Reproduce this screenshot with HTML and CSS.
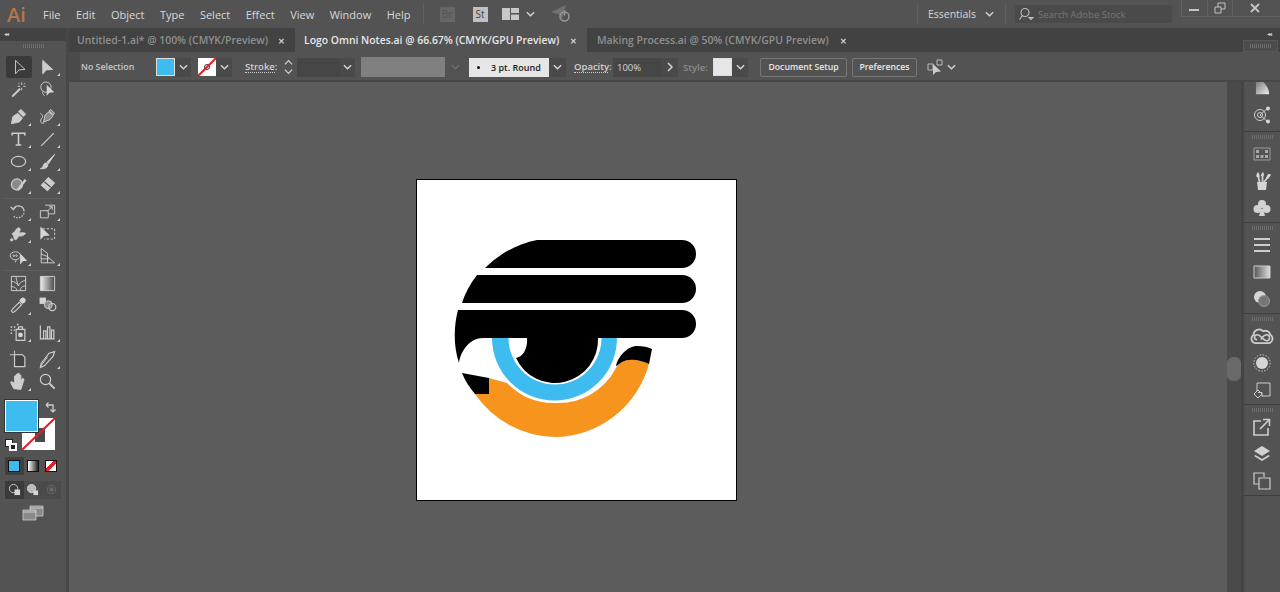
FILE: index.html
```html
<!DOCTYPE html>
<html lang="en">
<head>
    <meta charset="UTF-8">
    <title>Logo Omni Notes.ai</title>
    <link rel="stylesheet" href="styles.css">
</head>
<body>
    <header class="menubar">
        <span class="app-logo">Ai</span>
        <nav class="menu">
            <span>File</span><span>Edit</span><span>Object</span><span>Type</span><span>Select</span><span>Effect</span><span>View</span><span>Window</span><span>Help</span>
        </nav>
        <span class="menu-sep sep-apps"></span>
        <span class="badge badge-br">Br</span>
        <span class="badge badge-st">St</span>
        <svg class="layout-ico" viewBox="0 0 17 12"><path d="M0 0h8v12H0zM9 0h8v5H9zM9 6.500h8V12H9z"/></svg>
        <svg class="chev chev-menu" viewBox="0 0 10 6"><path d="M1 1l4 4 4-4"/></svg>
        <svg class="gpu-ico" viewBox="0 0 22 20"><path class="dim" d="M1 8L16 1l-4 15-2-5z"/><circle cx="14.500" cy="12.500" r="4.500"/><path d="M14.500 6.500v5"/></svg>
        <div class="menubar-right">
            <span class="menu-sep"></span>
            <span class="workspace">Essentials</span>
            <svg class="chev chev-work" viewBox="0 0 10 6"><path d="M1 1l4 4 4-4"/></svg>
            <span class="menu-sep sep-search"></span>
            <div class="search">
                <svg viewBox="0 0 16 14"><circle cx="7" cy="5.500" r="4"/><path d="M4.500 8.500L1.500 12.500M11 10.500h4l-2 2z"/></svg>
                <span>Search Adobe Stock</span>
            </div>
            <div class="win-btns">
                <span class="win-btn"><svg viewBox="0 0 12 12"><path d="M1 8h10" stroke-width="2"/></svg></span>
                <span class="win-btn"><svg viewBox="0 0 12 12"><path d="M1 5h6v6H1zM4 5V1h7v6H7"/></svg></span>
                <span class="win-btn win-close"><svg viewBox="0 0 12 12"><path d="M2 2l8 8M10 2l-8 8" stroke-width="1.800"/></svg></span>
            </div>
        </div>
    </header>

    <aside class="tools">
        <div class="panel-head">&#9666;&#9666;</div>
        <div class="grip-row"><span class="dock-grip"></span></div>

        <div class="tool-group">
            <span class="tool tool-active"><svg class="ico" viewBox="0 0 24 24"><path d="M7 3v17l4.500-5 7.500-.500z"/></svg></span>
            <span class="tool more"><svg class="ico solid" viewBox="0 0 24 24"><path d="M6 3v17l4.500-5 8-.500z"/></svg></span>
            <span class="tool"><svg class="ico" viewBox="0 0 24 24"><path d="M4 21L14 11" stroke-width="2.500"/><path d="M16 3v3M16 10v3M11 8h3M18 8h3M12 4l1.500 1.500M20 4l-1.500 1.500"/></svg></span>
            <span class="tool"><svg class="ico" viewBox="0 0 24 24"><circle cx="10" cy="9" r="6.500"/><path d="M7 14c-3 2 0 4 1 6"/><path class="fill-light" d="M11 6v14l3.500-4 6-.500z"/></svg></span>
        </div>

        <div class="tool-group group-line">
            <span class="tool more"><svg class="ico solid" viewBox="0 0 24 24"><path d="M3 21l2-9 6-4 6 6-4 5zM12 6l3-3 6 6-3 3z"/></svg></span>
            <span class="tool more"><svg class="ico" viewBox="0 0 24 24"><path class="fill-mid" d="M7 19l2-9 5-4 5 5-4 5zM14 5l2-2 5 5-2 2z"/><path d="M8 20c-5 2-6-3-3-6 2-2 0-5-2-6"/></svg></span>
            <span class="tool more"><svg class="ico type" viewBox="0 0 24 24"><path d="M4 7V4h16v3M12 4v15M8.500 19h7" stroke-width="2"/></svg></span>
            <span class="tool more"><svg class="ico" viewBox="0 0 24 24"><path d="M4 20L20 4" stroke-width="1.500"/></svg></span>
            <span class="tool more"><svg class="ico" viewBox="0 0 24 24"><ellipse cx="12" cy="12" rx="9" ry="6.500" stroke-width="1.500"/></svg></span>
            <span class="tool more"><svg class="ico solid" viewBox="0 0 24 24"><path d="M21 3L11 13l2 2zM10 14c-3 0-3 3-4 5-.500 1-2 1.500-3 2 4 .500 9 0 9.500-5z"/></svg></span>
            <span class="tool more"><svg class="ico" viewBox="0 0 24 24"><circle class="fill-mid" cx="10" cy="12" r="7" stroke-width="1.500"/><path d="M11 19L21 6" stroke-width="3"/></svg></span>
            <span class="tool more"><svg class="ico solid" viewBox="0 0 24 24"><path d="M13 3l8 7-9 10-8-7z"/><path class="cut" d="M8 8.500l8 7"/></svg></span>
        </div>

        <div class="tool-group group-line">
            <span class="tool more"><svg class="ico" viewBox="0 0 24 24"><path d="M6 8c3-5 13-4 13 4" stroke-width="1.500"/><path d="M2 6l3.500 3.500L9 5.500" stroke-width="1.500"/><path d="M19 14c-1 5-9 8-13 4" stroke-width="1.500" stroke-dasharray="2 1.500"/></svg></span>
            <span class="tool more"><svg class="ico" viewBox="0 0 24 24"><path d="M3 11h10v9H3zM9 4h12v11H13"/><path d="M11 12l7-6M14 6h4v4"/></svg></span>
            <span class="tool more"><svg class="ico solid" viewBox="0 0 24 24"><path d="M4 12c2-1 4-2 5-5 1-2 4-3 5-1 1 3-2 3-1 5 2 1 6-1 8 1-2 2-5 4-8 3-2 1-3 5-5 5-2-1-1-4-4-8z"/><circle cx="3.500" cy="20" r="1.500"/></svg></span>
            <span class="tool"><svg class="ico" viewBox="0 0 24 24"><path d="M6 6h15v13H8" stroke-dasharray="3 2"/><path class="fill-light" d="M3 3v17l4.500-5 7.500-.500z"/></svg></span>
            <span class="tool more"><svg class="ico" viewBox="0 0 24 24"><ellipse cx="8" cy="11" rx="6.500" ry="5"/><path d="M9 16.500l-1 3"/><circle cx="6" cy="11" r="1"/><circle cx="9.500" cy="11" r="1"/><path class="fill-light" d="M14 8v14l3.500-4 5.500-.500z"/></svg></span>
            <span class="tool more"><svg class="ico" viewBox="0 0 24 24"><path d="M4 2v18h17M4 2l8 6v12M4 9l8 3 9 8M4 15h10"/></svg></span>
        </div>

        <div class="tool-group">
            <span class="tool"><svg class="ico" viewBox="0 0 24 24"><path d="M3 3h18v18H3zM3 9c5 1 7 3 9 6M21 8c-4 1-7 2-9 7M9 3c0 4 1 7 3 12M3 16c4 0 6 1 7 5M21 15c-3 0-6 1-7 6"/></svg></span>
            <span class="tool"><svg class="ico" viewBox="0 0 24 24"><defs><linearGradient id="gradTool"><stop offset="0" stop-color="#eeeeee"/><stop offset="1" stop-color="#4a4a4a"/></linearGradient></defs><path d="M3 3h18v18H3z" fill="url(#gradTool)"/></svg></span>
            <span class="tool more"><svg class="ico" viewBox="0 0 24 24"><path class="fill-light" d="M15 3c2-2 4-1 5 0s2 3 0 5l-3 2-4-4z"/><path d="M13 8l3 3-8 8-3 2-2-2 2-3z" stroke-width="1.400"/></svg></span>
            <span class="tool"><svg class="ico" viewBox="0 0 24 24"><rect class="fill-light" x="2" y="2" width="8" height="8"/><circle class="fill-mid" cx="13" cy="11" r="5"/><circle cx="18" cy="14" r="4.500" stroke-width="1.500"/></svg></span>
        </div>

        <div class="tool-group">
            <span class="tool more"><svg class="ico" viewBox="0 0 24 24"><path d="M2 5h2M6 5h2M2 9h2M6 9h2M2 13h2M10 2h2" stroke-width="1.800"/><path d="M9 8h11v14H9zM12 8V5h5v3" stroke-width="1.500"/><circle class="fill-light" cx="14.500" cy="15" r="3"/></svg></span>
            <span class="tool more"><svg class="ico" viewBox="0 0 24 24"><path d="M3 3v17h18M7 20V10h3v10M12 20V5h3v15M17 20V9h3v11" stroke-width="1.500"/></svg></span>
        </div>

        <div class="tool-group">
            <span class="tool"><svg class="ico" viewBox="0 0 24 24"><path d="M1 6h16M7 1v16"/><path class="fill-dark" d="M7 6h10l3 3v12H7z" stroke-width="1.500"/></svg></span>
            <span class="tool more"><svg class="ico" viewBox="0 0 24 24"><path d="M21 2L14 4 4 17l-1 5 5-2L19 8z" stroke-width="1.500"/><path d="M3 21l9-12"/></svg></span>
            <span class="tool more"><svg class="ico solid" viewBox="0 0 24 24"><path d="M6 21l-4-8 2-1 3 3V5h2v6-8h2v8-9h2v9-7h2v8l2-4 2 1-3 10-1 3z"/></svg></span>
            <span class="tool"><svg class="ico" viewBox="0 0 24 24"><circle cx="9.500" cy="9.500" r="6.500" stroke-width="1.500"/><path d="M14.500 14.500L21 21" stroke-width="2.500"/></svg></span>
        </div>

        <div class="swatches">
            <svg class="stroke-swatch" viewBox="0 0 33 32"><path d="M0 0h33v32H0z" fill="#fff"/><path d="M13 10h10v14H13z" fill="#4a4a4a"/><path d="M0 32L33 0" stroke="#e01f26" stroke-width="2"/></svg>
            <span class="fill-swatch"></span>
            <svg class="swap" viewBox="0 0 12 12"><path d="M1 4h7v7M1 4l2.500-2.500M1 4l2.500 2.500M8 11L5.500 8.500M8 11l2.500-2.500"/></svg>
            <span class="default-swatch"><i></i><b></b></span>
        </div>

        <div class="mode-row">
            <span class="mode mode-on"><i class="mode-color"></i></span>
            <span class="mode"><i class="mode-grad"></i></span>
            <span class="mode"><i class="mode-none"></i></span>
        </div>

        <div class="mode-row draw-row">
            <span class="mode-draw mode-on"><svg viewBox="0 0 14 14"><circle cx="6" cy="6" r="4.500"/><path class="fill-light" d="M7 7h6v6H7z"/></svg></span>
            <span class="mode-draw"><svg viewBox="0 0 14 14"><circle cx="6" cy="6" r="4.500" fill="#bbb"/><path class="fill-light" d="M8 8h5v5H8z"/></svg></span>
            <span class="mode-draw draw-off"><svg viewBox="0 0 14 14"><circle cx="7" cy="7" r="4.500"/><circle cx="7" cy="7" r="2" fill="#6a6a6a"/></svg></span>
        </div>

        <svg class="screen-ico" viewBox="0 0 22 16"><path d="M1 5h13v10H1z" fill="#8a8a8a"/><path d="M8 1h13v10h-7V5H8z" fill="#8a8a8a"/><path d="M1 7h13M8 3h13" stroke="#ddd"/></svg>
    </aside>

    <div class="tabs">
        <div class="tab tab-first">
            <span>Untitled-1.ai* @ 100% (CMYK/Preview)</span>
            <b class="tab-x">&#10005;</b>
        </div>
        <div class="tab tab-active">
            <span>Logo Omni Notes.ai @ 66.67% (CMYK/GPU Preview)</span>
            <b class="tab-x">&#10005;</b>
        </div>
        <div class="tab tab-last">
            <span>Making Process.ai @ 50% (CMYK/GPU Preview)</span>
            <b class="tab-x">&#10005;</b>
        </div>
    </div>

    <div class="dock-head">
        <div class="panel-head">&#9666;&#9666;</div>
        <div class="dock-tab"><span class="dock-grip"></span></div>
    </div>

    <div class="control">
        <span class="ctl-grip"></span>
        <span class="no-sel">No Selection</span>
        <span class="swatch-ctl swatch-blue"></span>
        <span class="drop drop-fill"><svg class="chev" viewBox="0 0 10 6"><path d="M1 1l4 4 4-4"/></svg></span>
        <svg class="swatch-none" viewBox="0 0 18 18"><path d="M0 0h18v18H0z" fill="#fff"/><circle cx="9" cy="9" r="2.500" fill="none" stroke="#333"/><path d="M0 18L18 0" stroke="#e01f26" stroke-width="2"/></svg>
        <span class="drop drop-stroke"><svg class="chev" viewBox="0 0 10 6"><path d="M1 1l4 4 4-4"/></svg></span>
        <span class="lbl lbl-stroke">Stroke:</span>
        <span class="stepper"><svg viewBox="0 0 10 18"><path d="M1 6l4-4 4 4M1 12l4 4 4-4"/></svg></span>
        <span class="stroke-input"></span>
        <span class="drop drop-weight"><svg class="chev" viewBox="0 0 10 6"><path d="M1 1l4 4 4-4"/></svg></span>
        <span class="gray-box"></span>
        <span class="drop drop-dim"><svg class="chev" viewBox="0 0 10 6"><path d="M1 1l4 4 4-4"/></svg></span>
        <span class="brush"><i></i>3 pt. Round</span>
        <span class="drop drop-brush"><svg class="chev" viewBox="0 0 10 6"><path d="M1 1l4 4 4-4"/></svg></span>
        <span class="lbl lbl-opacity">Opacity:</span>
        <span class="opacity-input">100%</span>
        <span class="drop drop-more"><svg class="chev" viewBox="0 0 6 10"><path d="M1 1l4 4-4 4"/></svg></span>
        <span class="lbl-dim">Style:</span>
        <span class="swatch-ctl swatch-style"></span>
        <span class="drop drop-style"><svg class="chev" viewBox="0 0 10 6"><path d="M1 1l4 4 4-4"/></svg></span>
        <button class="btn btn-doc">Document Setup</button>
        <button class="btn btn-pref">Preferences</button>
        <svg class="arrange-ico" viewBox="0 0 16 16"><path d="M1 5h5v6H1zM10 1h5v5h-5z" fill="none" stroke="#bbb"/><path d="M6 5v11l3-3 5-.500z" fill="#ccc"/></svg>
        <svg class="chev chev-arrange" viewBox="0 0 10 6"><path d="M1 1l4 4 4-4"/></svg>
    </div>

    <main class="canvas-wrap">
        <div class="canvas">
            <div class="artboard">
                <svg class="logo" viewBox="417 180 319 319">
                    <path d="M485 268C499 254 517 244 537 240L682 240A14 14 0 0 1 682 268Z"/>
                    <path d="M477 275L682 275A14 14 0 0 1 682 303L462 303C465 293 470 284 477 275Z"/>
                    <path d="M458 310L682 310A14 14 0 0 1 682 338L483 338C470 338 461 350 459 363C453 345 454 325 458 310Z"/>
                    <path fill="#3fbcef" d="M492 338A62.500 62.500 0 0 0 617 338L601.500 338A46.500 46.500 0 0 1 508.500 338Z"/>
                    <path d="M527 338L598 338A43 43 0 0 1 516 358C522 357 528 350 527 338Z"/>
                    <path fill="#f7941d" d="M489 394L475 394A99 99 0 0 0 555 437A99 99 0 0 0 649 364C640 360 630 358 622 362C619 364 617 366 616 368A65 65 0 0 1 555 403A65 65 0 0 1 507 383L489 378Z"/>
                    <path d="M462 373L489 378L489 394L475 394C470 388 465 381 462 373Z"/>
                    <path d="M616 366C618 356 628 346 637 346C643 346 648 347 652 349L649 364C640 360 630 358 622 362C619 364 617 366 616 366Z"/>
                </svg>
            </div>
        </div>
        <div class="scrollbar"><span class="thumb"></span></div>
    </main>

    <aside class="dock">
        <div class="dock-top">
            <span class="dock-ico dock-cut"><svg viewBox="0 0 16 16"><defs><linearGradient id="gradPie" x1="0" y1="0" x2="1" y2="1"><stop offset="0" stop-color="#777"/><stop offset="1" stop-color="#eee"/></linearGradient></defs><path d="M1 0h6c4 2 8 8 8 14H1z" fill="url(#gradPie)"/></svg></span>
            <span class="dock-ico"><svg viewBox="0 0 18 18"><circle cx="7" cy="9" r="5.500"/><circle cx="7" cy="9" r="2.500"/><path d="M7 9L15 2M7 9l8 7"/><circle class="fill-light" cx="15" cy="2.500" r="2"/><circle class="fill-light" cx="15" cy="15.500" r="2"/></svg></span>
        </div>
        <div class="dock-group">
            <span class="dock-grip"></span>
            <span class="dock-ico"><svg viewBox="0 0 18 18"><path d="M1 3h16v12H1z" stroke="#9a9a9a"/><path class="fill-soft" d="M3 5h3v3H3zM12 5h3v3h-3zM3 10h3v3H3zM7.500 10h3v3h-3zM12 10h3v3h-3z"/></svg></span>
            <span class="dock-ico"><svg viewBox="0 0 18 18"><path class="fill-light" d="M4 10h10l-1 8H5z"/><path d="M6.500 10L5 3M9.500 10V2M11 10l5-6" stroke-width="1.800"/><path class="fill-light" d="M3.500 5C3 3 4 1 5 0c1 1 2 3 1.500 5zM8 4c0-2 1-3 2-4 1 1 1 3 .5 4zM13 6l2-4c1 0 3 0 3 1l-3 4z"/></svg></span>
            <span class="dock-ico"><svg class="solid-ico" viewBox="0 0 18 18"><circle cx="9" cy="5" r="4"/><circle cx="4.500" cy="10" r="4"/><circle cx="13.500" cy="10" r="4"/><path d="M8 10h2l2 7H6z"/></svg></span>
        </div>
        <div class="dock-group">
            <span class="dock-grip"></span>
            <span class="dock-ico"><svg viewBox="0 0 18 18"><path d="M1 3h16M1 9h16M1 15h16" stroke-width="2.200"/></svg></span>
            <span class="dock-ico"><svg viewBox="0 0 18 18"><defs><linearGradient id="gradPanel"><stop offset="0" stop-color="#555"/><stop offset="1" stop-color="#ddd"/></linearGradient></defs><path d="M1 3h16v12H1z" fill="url(#gradPanel)"/></svg></span>
            <span class="dock-ico"><svg viewBox="0 0 18 18"><circle class="fill-light" cx="7" cy="7" r="6"/><circle cx="11" cy="11" r="5.500" fill="#777" stroke="#999"/></svg></span>
        </div>
        <div class="dock-group">
            <span class="dock-grip"></span>
            <span class="dock-ico dock-wide"><svg viewBox="0 0 20 16"><path d="M5 14C1 14 0 9 3 7c0-4 5-6 8-3 3-1 5 0 6 3 3 2 2 7-2 7z" stroke-width="1.500"/><path d="M6 11c-3 0-3-4 0-4 3 0 5 5 8 5 3 0 3-5 0-5-3 0-4 3-5 4" stroke-width="1.300"/></svg></span>
            <span class="dock-ico"><svg viewBox="0 0 18 18"><circle class="fill-light" cx="9" cy="9" r="6"/><circle cx="9" cy="9" r="8.200" stroke-dasharray="1.500 1.500"/></svg></span>
            <span class="dock-ico"><svg viewBox="0 0 18 18"><path d="M4 10V2h13v13H9"/><path d="M5 9l-4 4 4 4 4-4zM5 11.500h4v4"/></svg></span>
        </div>
        <div class="dock-group">
            <span class="dock-grip"></span>
            <span class="dock-ico"><svg viewBox="0 0 18 18"><path d="M8 3H1v14h14v-7" stroke-width="1.600"/><path d="M7 11L16 2M10 1.500h6.500V8" stroke-width="1.600"/></svg></span>
            <span class="dock-ico"><svg class="solid-ico" viewBox="0 0 18 18"><path d="M9 1l8 5-8 5-8-5z"/><path d="M2.500 10L9 14l6.500-4 1.500 1-8 5-8-5z"/></svg></span>
            <span class="dock-ico"><svg viewBox="0 0 18 18"><path d="M11 5V1H1v11h5M6 6h11v11H6z" stroke-width="1.200"/></svg></span>
        </div>
        <div class="dock-line"></div>
    </aside>
</body>
</html>
```

FILE: styles.css
```css
* {
    box-sizing: border-box;
}

html, body {
    margin: 0;
    height: 100%;
    overflow: hidden;
}

body {
    width: 1280px;
    height: 592px;
    display: grid;
    grid-template-columns: 69px 1fr 39px;
    grid-template-rows: 28px 24px 30px 1fr;
    background: #535353;
    font-family: "Open Sans", "Liberation Sans", sans-serif;
    font-size: 11px;
    color: #d6d6d6;
}

svg {
    display: block;
}

/* top menu */
.menubar {
    grid-column: 1 / 4;
    display: flex;
    align-items: center;
    background: #535353;
}

.app-logo {
    width: 43px;
    padding-left: 7px;
    font-size: 20px;
    font-weight: 600;
    color: #b5764a;
}

.menu {
    display: flex;
    gap: 15.500px;
    font-size: 11px;
    color: #d8d8d8;
}

.menu-sep {
    width: 1px;
    height: 20px;
    background: #606060;
}

.sep-apps {
    margin-left: 12px;
}

.badge {
    width: 15px;
    height: 15px;
    margin-left: 16px;
    font-size: 10px;
    line-height: 15px;
    text-align: center;
}

.badge-br {
    background: #666;
    color: #555;
}

.badge-st {
    background: #c0c0c0;
    color: #444;
    margin-left: 18px;
}

.layout-ico {
    width: 17px;
    height: 12px;
    margin-left: 14px;
    fill: #c8c8c8;
}

.chev {
    width: 9px;
    height: 6px;
    fill: none;
    stroke: #d6d6d6;
    stroke-width: 1.500;
}

.chev-menu {
    margin-left: 7px;
}

.gpu-ico {
    width: 22px;
    height: 20px;
    margin-left: 15px;
    fill: none;
    stroke: #9a9a9a;
    stroke-width: 1.400;
}

.gpu-ico .dim {
    fill: #707070;
    stroke: none;
}

.menubar-right {
    margin-left: auto;
    display: flex;
    align-items: center;
    height: 100%;
}

.workspace {
    margin-left: 10px;
    font-size: 10.500px;
}

.chev-work {
    margin-left: 9px;
}

.sep-search {
    margin-left: 11px;
}

.search {
    display: flex;
    align-items: center;
    width: 157px;
    height: 18px;
    margin-left: 9px;
    padding-left: 3px;
    background: #4a4a4a;
    border-radius: 2px;
    color: #777;
    font-size: 9.500px;
}

.search svg {
    width: 16px;
    height: 14px;
    margin-right: 4px;
    fill: none;
    stroke: #c0c0c0;
    stroke-width: 1.100;
}

.win-btns {
    display: flex;
    align-self: flex-start;
    width: 99px;
    height: 17px;
    margin-left: 9px;
    border: 1px solid #626262;
    border-top: none;
    border-right: none;
}

.win-btn {
    width: 26px;
    display: flex;
    align-items: center;
    justify-content: center;
    border-right: 1px solid #626262;
}

.win-close {
    width: 47px;
    padding-right: 4px;
    border-right: none;
}

.win-btn svg {
    width: 12px;
    height: 12px;
    fill: none;
    stroke: #c4c4c4;
}

/* left tools */
.tools {
    grid-column: 1;
    grid-row: 2 / 5;
    background: #535353;
    border-right: 3px solid #474747;
    overflow: hidden;
}

.panel-head {
    height: 13px;
    padding-left: 4px;
    background: #424242;
    font-size: 6px;
    line-height: 12px;
    letter-spacing: -1px;
    color: #ccc;
}

.grip-row {
    height: 14.700px;
    padding-top: 3px;
    background: #535353;
}

.tool-group {
    display: grid;
    grid-template-columns: 29px 29px;
    grid-auto-rows: 22.700px;
    padding-left: 4px;
    margin-bottom: 4px;
}

.group-line {
    position: relative;
}

.group-line::after {
    content: "";
    position: absolute;
    left: 4px;
    right: 4px;
    bottom: -3px;
    height: 1px;
    background: #5e5e5e;
}

.tool {
    position: relative;
    display: flex;
    align-items: center;
    justify-content: center;
}

.tool-active {
    width: 26px;
    margin-left: 2px;
    background: #3a3a3a;
    border-radius: 2px;
}

.more::after {
    content: "";
    position: absolute;
    right: 2px;
    bottom: 2px;
    border-style: solid;
    border-width: 0 0 3px 3px;
    border-color: transparent transparent #d0d0d0 transparent;
}

.ico {
    width: 19px;
    height: 19px;
    fill: none;
    stroke: #cdcdcd;
    stroke-width: 1.200;
}

.solid {
    fill: #cdcdcd;
}

.fill-light {
    fill: #d6d6d6;
    stroke: none;
}

.fill-soft {
    fill: #a8a8a8;
    stroke: none;
}

.fill-mid {
    fill: #8a8a8a;
}

.fill-dark {
    fill: #444;
}

.cut {
    stroke: #535353;
    stroke-width: 1.500;
}

.swatches {
    position: relative;
    height: 55.500px;
}

.fill-swatch {
    position: absolute;
    left: 5px;
    top: 3px;
    width: 33px;
    height: 32px;
    background: #3fbcef;
    border: 1px solid #fff;
    box-shadow: 0 0 0 1px #333;
}

.stroke-swatch {
    position: absolute;
    left: 22px;
    top: 20.500px;
    width: 33px;
    height: 32px;
}

.swap {
    position: absolute;
    left: 45px;
    top: 4px;
    width: 12px;
    height: 12px;
    fill: none;
    stroke: #ccc;
    stroke-width: 1.300;
}

.default-swatch {
    position: absolute;
    left: 5px;
    top: 42px;
    width: 12px;
    height: 12px;
}

.default-swatch i {
    position: absolute;
    left: 0;
    top: 0;
    width: 8px;
    height: 8px;
    background: #fff;
    border: 1px solid #222;
}

.default-swatch b {
    position: absolute;
    right: 0;
    bottom: 0;
    width: 8px;
    height: 8px;
    background: #222;
    border: 2px solid #fff;
}

.mode-row {
    display: flex;
    padding-left: 5px;
    margin-top: 4px;
}

.mode {
    width: 18.500px;
    height: 18px;
    display: flex;
    align-items: center;
    justify-content: center;
}

.mode-on {
    background: #3f3f3f;
    border-radius: 1px;
}

.mode i {
    width: 12px;
    height: 12px;
    border: 1px solid #111;
}

.mode-color {
    background: #3fbcef;
}

.mode-grad {
    background: linear-gradient(to right, #fff, #222);
}

.mode-none {
    background: linear-gradient(to top left, #fff 38%, #e01f26 38%, #e01f26 62%, #fff 62%);
}

.draw-row {
    margin-top: 6px;
}

.mode-draw {
    width: 18.500px;
    height: 18px;
    display: flex;
    align-items: center;
    justify-content: center;
    background: #4b4b4b;
}

.mode-draw.mode-on {
    background: #3a3a3a;
}

.mode-draw svg {
    width: 13px;
    height: 13px;
    fill: none;
    stroke: #ccc;
}

.draw-off svg {
    stroke: #6a6a6a;
}

.screen-ico {
    width: 22px;
    height: 16px;
    margin: 6px 0 0 22px;
    stroke: #ccc;
    stroke-width: 0.800;
}

/* document tabs */
.tabs {
    grid-column: 2;
    grid-row: 2;
    display: flex;
    width: 1172px;
    background: #424242;
    font-size: 10.400px;
    font-weight: 600;
    color: #8f8f8f;
}

.tab {
    display: flex;
    align-items: center;
    justify-content: space-between;
    height: 24px;
}

.tab-first {
    width: 226px;
    padding: 0 10px 0 8px;
}

.tab-active {
    width: 292px;
    padding: 0 10px 0 9px;
    background: #535353;
    color: #e6e6e6;
}

.tab-last {
    width: 270px;
    padding: 0 10px 0 10px;
}

.tab-x {
    font-size: 8px;
    color: #d0d0d0;
}

.dock-head {
    grid-column: 3;
    grid-row: 2;
    background: #424242;
}

.dock-head .panel-head {
    padding-left: 26px;
    height: 12px;
}

.dock-tab {
    width: 35px;
    height: 12px;
    margin-left: 2px;
    padding-top: 3px;
    background: #4c4c4c;
    border: 1px solid #585858;
}

.dock-grip {
    display: block;
    width: 21px;
    height: 4px;
    margin: 0 auto;
    background: repeating-linear-gradient(to right, #6d6d6d 0 1px, transparent 1px 2px);
}

/* control bar */
.control {
    grid-column: 2 / 4;
    grid-row: 3;
    display: flex;
    align-items: center;
    background: #535353;
    box-shadow: inset 0 -2px #474747;
    font-size: 9.500px;
}

.ctl-grip {
    width: 11px;
    height: 28px;
    align-self: flex-start;
    background: #4a4a4a;
}

.no-sel {
    width: 52px;
    margin-left: 1px;
    font-weight: 600;
    font-size: 8.800px;
    color: #c8c8c8;
    white-space: nowrap;
}

.swatch-ctl {
    width: 19px;
    height: 18px;
    border: 1px solid #ddd;
}

.swatch-blue {
    margin-left: 23px;
    background: #3fbcef;
}

.swatch-style {
    margin-left: 7px;
    background: #e6e6e6;
}

.drop {
    display: flex;
    align-items: center;
    justify-content: center;
    height: 19px;
    background: #4a4a4a;
}

.drop-fill {
    width: 16px;
}

.swatch-none {
    width: 18px;
    height: 18px;
    margin-left: 7px;
}

.drop-stroke {
    width: 16px;
}

.lbl {
    font-weight: 600;
    color: #d2d2d2;
    border-bottom: 1px dotted #ccc;
    line-height: 11px;
}

.lbl-stroke {
    margin-left: 13px;
    width: 30px;
    white-space: nowrap;
}

.stepper {
    width: 15px;
    margin-left: 6px;
}

.stepper svg {
    width: 9px;
    height: 18px;
    margin: 0 auto;
    fill: none;
    stroke: #d6d6d6;
    stroke-width: 1.300;
}

.stroke-input {
    width: 43px;
    height: 19px;
    margin-left: 1px;
    background: #464646;
}

.drop-weight {
    width: 15px;
}

.gray-box {
    width: 84px;
    height: 20px;
    margin-left: 6px;
    background: #808080;
}

.drop-dim {
    width: 20px;
    background: none;
}

.drop-dim .chev {
    stroke: #6f6f6f;
}

.brush {
    display: flex;
    align-items: center;
    width: 80px;
    height: 19px;
    margin-left: 4px;
    padding-left: 8px;
    background: #e6e6e6;
    color: #222;
    font-size: 9px;
    font-weight: 600;
}

.brush i {
    width: 3px;
    height: 3px;
    margin-right: 11px;
    border-radius: 50%;
    background: #111;
}

.drop-brush {
    width: 17px;
}

.lbl-opacity {
    margin-left: 8px;
    width: 34px;
}

.opacity-input {
    width: 48px;
    height: 19px;
    margin-left: 5px;
    padding-left: 4px;
    line-height: 19px;
    background: #464646;
    font-size: 9.500px;
}

.drop-more {
    width: 17px;
}

.drop-more .chev {
    width: 6px;
    height: 10px;
}

.lbl-dim {
    margin-left: 5px;
    width: 23px;
    font-weight: 600;
    color: #8c8c8c;
}

.drop-style {
    width: 16px;
}

.btn {
    height: 19px;
    padding: 0;
    margin-left: 5px;
    background: #535353;
    border: 1px solid #777;
    border-radius: 2px;
    color: #e8e8e8;
    font-family: inherit;
    font-size: 8.700px;
    font-weight: 600;
    white-space: nowrap;
}

.btn-doc {
    width: 87px;
    margin-left: 12px;
}

.btn-pref {
    width: 65px;
}

.arrange-ico {
    width: 16px;
    height: 16px;
    margin-left: 10px;
}

.chev-arrange {
    margin-left: 4px;
}

/* canvas */
.canvas-wrap {
    grid-column: 2;
    grid-row: 4;
    display: flex;
    background: #5c5c5c;
}

.canvas {
    flex: 1;
    padding: 97px 0 0 347px;
}

.artboard {
    width: 321px;
    height: 322px;
    background: #fff;
    border: 1px solid #000;
}

.logo {
    width: 319px;
    height: 319px;
    fill: #000;
}

.scrollbar {
    position: relative;
    width: 14px;
    background: #4a4a4a;
}

.thumb {
    position: absolute;
    left: 0;
    top: 275px;
    width: 14px;
    height: 24px;
    border-radius: 6px;
    background: #696969;
}

/* right dock */
.dock {
    grid-column: 3;
    grid-row: 4;
    background: #535353;
    border-left: 3px solid #444;
}

.dock-top {
    height: 49px;
    overflow: hidden;
}

.dock-group {
    height: 91px;
    padding-top: 3px;
    border-top: 1px solid #3e3e3e;
}

.dock-group .dock-grip {
    margin-bottom: 1px;
}

.dock-ico {
    display: flex;
    align-items: center;
    justify-content: center;
    height: 27px;
}

.dock-cut {
    height: 19px;
    align-items: flex-end;
    padding-bottom: 5px;
}

.dock-ico svg {
    width: 18px;
    height: 18px;
    fill: none;
    stroke: #cdcdcd;
    stroke-width: 1;
}

.dock-cut svg {
    width: 15px;
    height: 15px;
    stroke: none;
}

.dock-ico .solid-ico {
    fill: #d2d2d2;
    stroke: none;
}

.dock-wide svg {
    width: 24px;
    height: 20px;
}

.dock-line {
    border-top: 1px solid #3e3e3e;
}
```
